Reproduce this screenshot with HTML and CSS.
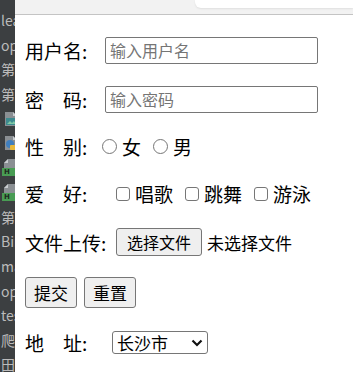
FILE: index.html
```html
<!DOCTYPE html>
<html lang="zh-CN">
<head>
    <meta charset="UTF-8">
    <title>表单</title>
    <link rel="stylesheet" href="styles.css">
</head>
<body>
    <div class="app">
        <aside class="ide-tree">
            <div class="tree-item">lea</div>
            <div class="tree-item">opt</div>
            <div class="tree-item">第一</div>
            <div class="tree-item">第二</div>
            <div class="tree-item">
                <svg class="file-icon" width="16" height="16" viewBox="0 0 16 16">
                    <path d="M2 1h8l4 4v10H2z" fill="#8a8f93"/>
                    <path d="M10 1v4h4z" fill="#c9cdd0"/>
                    <rect x="3" y="7" width="10" height="7" fill="#3d8a8f"/>
                    <path d="M4 13l3-3 2 2 2-2 2 3z" fill="#7fc7a5"/>
                </svg>
            </div>
            <div class="tree-item">
                <svg class="file-icon" width="16" height="16" viewBox="0 0 16 16">
                    <path d="M2 1h8l4 4v10H2z" fill="#8a8f93"/>
                    <path d="M10 1v4h4z" fill="#c9cdd0"/>
                    <circle cx="7" cy="9" r="4" fill="#3f7fbf"/>
                    <rect x="7" y="10" width="6" height="5" rx="1" fill="#e8b83a"/>
                </svg>
            </div>
            <div class="tree-item">
                <span class="doc-icon">
                    <svg width="16" height="9" viewBox="0 0 16 9">
                        <path d="M2 9V4l4-4h8v9z" fill="#8a8f93"/>
                        <path d="M2 4h4V0z" fill="#c9cdd0"/>
                    </svg>
                    <span class="badge">H</span>
                </span>
            </div>
            <div class="tree-item">
                <span class="doc-icon">
                    <svg width="16" height="9" viewBox="0 0 16 9">
                        <path d="M2 9V4l4-4h8v9z" fill="#8a8f93"/>
                        <path d="M2 4h4V0z" fill="#c9cdd0"/>
                    </svg>
                    <span class="badge">H</span>
                </span>
            </div>
            <div class="tree-item">第三</div>
            <div class="tree-item">Bin</div>
            <div class="tree-item">ma</div>
            <div class="tree-item">opt</div>
            <div class="tree-item">tes</div>
            <div class="tree-item">爬虫</div>
            <div class="tree-item">田</div>
        </aside>

        <div class="browser">
            <div class="toolbar">
                <div class="omnibox"></div>
            </div>

            <form class="page">
                <div class="row">
                    <span class="label">用户名:</span>
                    <input class="text-input" type="text" placeholder="输入用户名">
                </div>
                <div class="row">
                    <span class="label">密　码:</span>
                    <input class="text-input" type="password" placeholder="输入密码">
                </div>
                <div class="row">
                    <span class="label">性　别:</span>
                    <label class="choice"><input class="radio" type="radio" name="sex"><span>女</span></label>
                    <label class="choice"><input class="radio" type="radio" name="sex"><span>男</span></label>
                </div>
                <div class="row">
                    <span class="label">爱　好:</span>
                    <div class="choices">
                        <label class="choice"><input class="check" type="checkbox"><span>唱歌</span></label>
                        <label class="choice"><input class="check" type="checkbox"><span>跳舞</span></label>
                        <label class="choice"><input class="check" type="checkbox"><span>游泳</span></label>
                    </div>
                </div>
                <div class="row">
                    <span class="label label-wide">文件上传:</span>
                    <button class="file-button" type="button">选择文件</button>
                    <span class="file-status">未选择文件</span>
                </div>
                <div class="row">
                    <button class="btn" type="submit">提交</button>
                    <button class="btn" type="reset">重置</button>
                </div>
                <div class="row">
                    <span class="label">地　址:</span>
                    <div class="select-wrap">
                        <select class="city">
                            <option>长沙市</option>
                            <option>株洲市</option>
                            <option>湘潭市</option>
                        </select>
                        <svg class="chevron" width="12" height="8" viewBox="0 0 12 8">
                            <path d="M1.5 1.5L6 6l4.5-4.5" fill="none" stroke="#111" stroke-width="2.2"/>
                        </svg>
                    </div>
                </div>
            </form>
        </div>
    </div>
</body>
</html>
```

FILE: styles.css
```css
body {
    margin: 0;
    padding: 0;
    background-color: #ffffff;
    font-family: "Noto Sans CJK SC", "Noto Sans", sans-serif;
    overflow: hidden;
}
.app {
    display: flex;
    width: 353px;
    height: 372px;
}

/* IDE project tree peeking in on the left */
.ide-tree {
    width: 15px;
    flex-shrink: 0;
    background-color: #3c3f41;
    overflow: hidden;
    padding-top: 8px;
    box-sizing: border-box;
}
.tree-item {
    height: 24.6px;
    line-height: 24.6px;
    font-size: 14px;
    color: #bbbbbb;
    white-space: nowrap;
    padding-left: 1px;
    display: flex;
    align-items: center;
}
.file-icon {
    margin-left: 2px;
    flex-shrink: 0;
}
.doc-icon {
    display: flex;
    flex-direction: column;
    margin-left: 1px;
}
.doc-icon .badge {
    display: block;
    width: 16px;
    height: 8px;
    background-color: #499c54;
    color: #1e2a1f;
    font-family: "DejaVu Sans", sans-serif;
    font-size: 7px;
    font-weight: bold;
    line-height: 8px;
    padding-left: 2px;
}

/* browser */
.browser {
    flex: 1;
    display: flex;
    flex-direction: column;
    min-width: 0;
}
.toolbar {
    height: 14px;
    background-color: #f2f2f2;
    border-bottom: 1px solid #c4c4c4;
    flex-shrink: 0;
}
.omnibox {
    margin-left: 180px;
    height: 8px;
    background-color: #ffffff;
    border-bottom-left-radius: 6px;
    box-shadow: 0 1px 2px rgba(0, 0, 0, 0.08);
}

/* form page */
.page {
    display: grid;
    grid-template-rows: 50px 48px 47px 47px 50px 50px 50px;
    padding: 10px 0 0 10px;
    margin: 0;
    font-size: 19px;
    color: #000000;
}
.row {
    display: flex;
    align-items: center;
}
.label {
    min-width: 77px;
    flex-shrink: 0;
    white-space: nowrap;
}
.label-wide {
    min-width: 91px;
}
.text-input {
    margin: 0 0 0 3px;
    width: 213px;
    height: 27px;
    box-sizing: border-box;
    border: 1px solid #767676;
    border-radius: 2px;
    padding: 0 4px;
    font-family: "Noto Sans CJK SC", sans-serif;
    font-size: 16px;
}
.text-input::placeholder {
    color: #757575;
}
.choices {
    display: flex;
    margin-left: 14px;
}
.choice {
    display: flex;
    align-items: center;
    gap: 5px;
}
.choice + .choice {
    margin-left: 12px;
}
.radio, .check {
    appearance: none;
    margin: 0;
    width: 15px;
    height: 15px;
    border: 1px solid #767676;
    background-color: #ffffff;
    box-sizing: border-box;
}
.radio {
    border-radius: 50%;
}
.check {
    width: 14px;
    height: 14px;
    border-radius: 3px;
}
.file-button {
    height: 28px;
    padding: 0 10px;
    font-family: "Noto Sans CJK SC", sans-serif;
    font-size: 16px;
    color: #000000;
    background-color: #efefef;
    border: 1px solid #767676;
    border-radius: 3px;
    line-height: 1;
}
.file-status {
    margin-left: 5px;
    font-size: 17px;
}
.btn {
    height: 31px;
    padding: 0 8px;
    font-family: "Noto Sans CJK SC", sans-serif;
    font-size: 17px;
    color: #000000;
    background-color: #efefef;
    border: 1px solid #767676;
    border-radius: 3px;
    line-height: 1;
}
.btn + .btn {
    margin-left: 7px;
}
.select-wrap {
    position: relative;
    margin-left: 10px;
    display: flex;
}
.city {
    appearance: none;
    margin: 0;
    width: 96px;
    height: 23px;
    box-sizing: border-box;
    font-family: "Noto Sans CJK SC", sans-serif;
    font-size: 17px;
    line-height: 21px;
    color: #000000;
    border: 1px solid #767676;
    border-radius: 3px;
    background-color: #ffffff;
    padding: 0 0 0 4px;
}
.chevron {
    position: absolute;
    right: 5px;
    top: 8px;
    pointer-events: none;
}
```
